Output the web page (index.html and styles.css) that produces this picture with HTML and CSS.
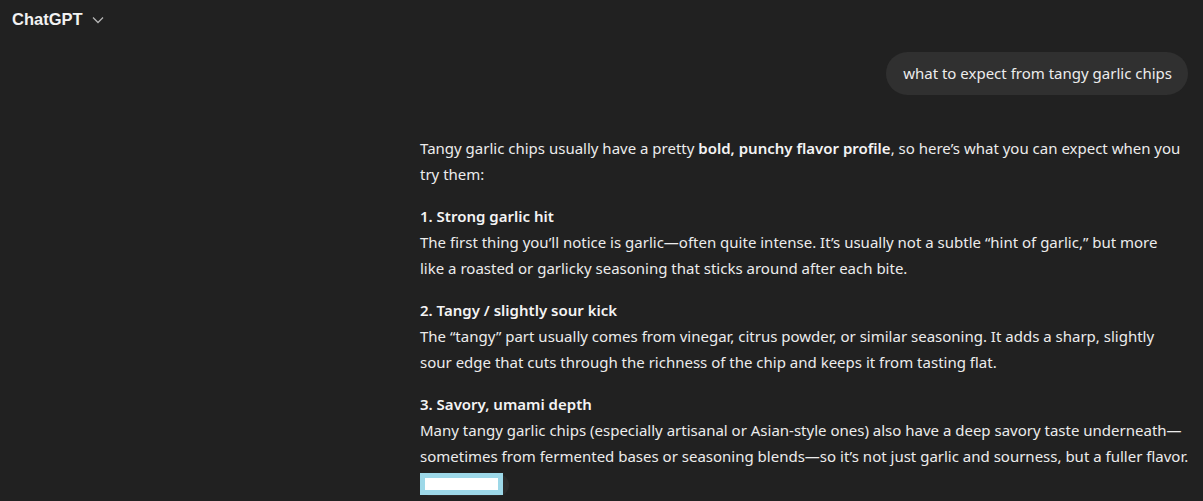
FILE: index.html
```html
<!DOCTYPE html>
<html lang="en">
<head>
<meta charset="utf-8">
<title>ChatGPT</title>
<link rel="stylesheet" href="styles.css">
</head>
<body>
<header class="topbar">
  <span class="brand">ChatGPT</span>
  <svg class="chev" width="12" height="8" viewBox="0 0 12 8"><path d="M1 1.5 L6 6.5 L11 1.5" fill="none" stroke="#b4b4b4" stroke-width="1.3"/></svg>
</header>
<main class="thread">
  <div class="user-row">
    <div class="bubble">what to expect from tangy garlic chips</div>
  </div>
  <article class="answer">
    <p>Tangy garlic chips usually have a pretty <strong>bold, punchy flavor profile</strong>, so here’s what you can expect when you<br>try them:</p>
    <p><strong>1. Strong garlic hit</strong><br>The first thing you’ll notice is garlic—often quite intense. It’s usually not a subtle “hint of garlic,” but more<br>like a roasted or garlicky seasoning that sticks around after each bite.</p>
    <p><strong>2. Tangy / slightly sour kick</strong><br>The “tangy” part usually comes from vinegar, citrus powder, or similar seasoning. It adds a sharp, slightly<br>sour edge that cuts through the richness of the chip and keeps it from tasting flat.</p>
    <p><strong>3. Savory, umami depth</strong><br>Many tangy garlic chips (especially artisanal or Asian-style ones) also have a deep savory taste underneath—<br>sometimes from fermented bases or seasoning blends—so it’s not just garlic and sourness, but a fuller flavor.</p>
    <div class="tail">
      <span class="pill"></span>
      <span class="mask"></span>
    </div>
  </article>
</main>
</body>
</html>
```
FILE: styles.css
```css
html, body {
  margin: 0;
  padding: 0;
  background: #212121;
  color: #ececec;
  font-family: "Noto Sans", "Open Sans", sans-serif;
  overflow: hidden;
}
.topbar {
  height: 36px;
  display: flex;
  align-items: center;
  gap: 9px;
  padding: 1px 0 0 12px;
}
.brand {
  font-family: "Liberation Sans", Arial, sans-serif;
  font-weight: 700;
  font-size: 16.5px;
  color: #f2f2f2;
}
.chev { margin-top: 1px; }
.thread {
  display: flex;
  flex-direction: column;
  margin-left: 420px;
  width: 768px;
}
.user-row {
  display: flex;
  justify-content: flex-end;
  margin-top: 15px;
}
.bubble {
  background: #303030;
  border-radius: 22px;
  padding: 10px 16px 11px 17px;
  font-size: 15px;
  line-height: 22px;
}
.answer {
  margin-top: 40px;
  margin-right: -30px;
  font-size: 15px;
  line-height: 26px;
  position: relative;
  white-space: nowrap;
}
.answer p { margin: 0 0 16px; }
.answer strong { font-weight: 600; color: #f4f4f4; }
.tail {
  position: relative;
  height: 24px;
  margin-top: -12px;
}
.pill {
  position: absolute;
  left: 0;
  top: 1px;
  width: 89px;
  height: 22px;
  border-radius: 11px;
  background: #2b2b2b;
}
.mask {
  position: absolute;
  left: 0;
  top: 0;
  width: 73px;
  height: 12px;
  border: 5px solid #9dd8e8;
  background: #ffffff;
}
```
